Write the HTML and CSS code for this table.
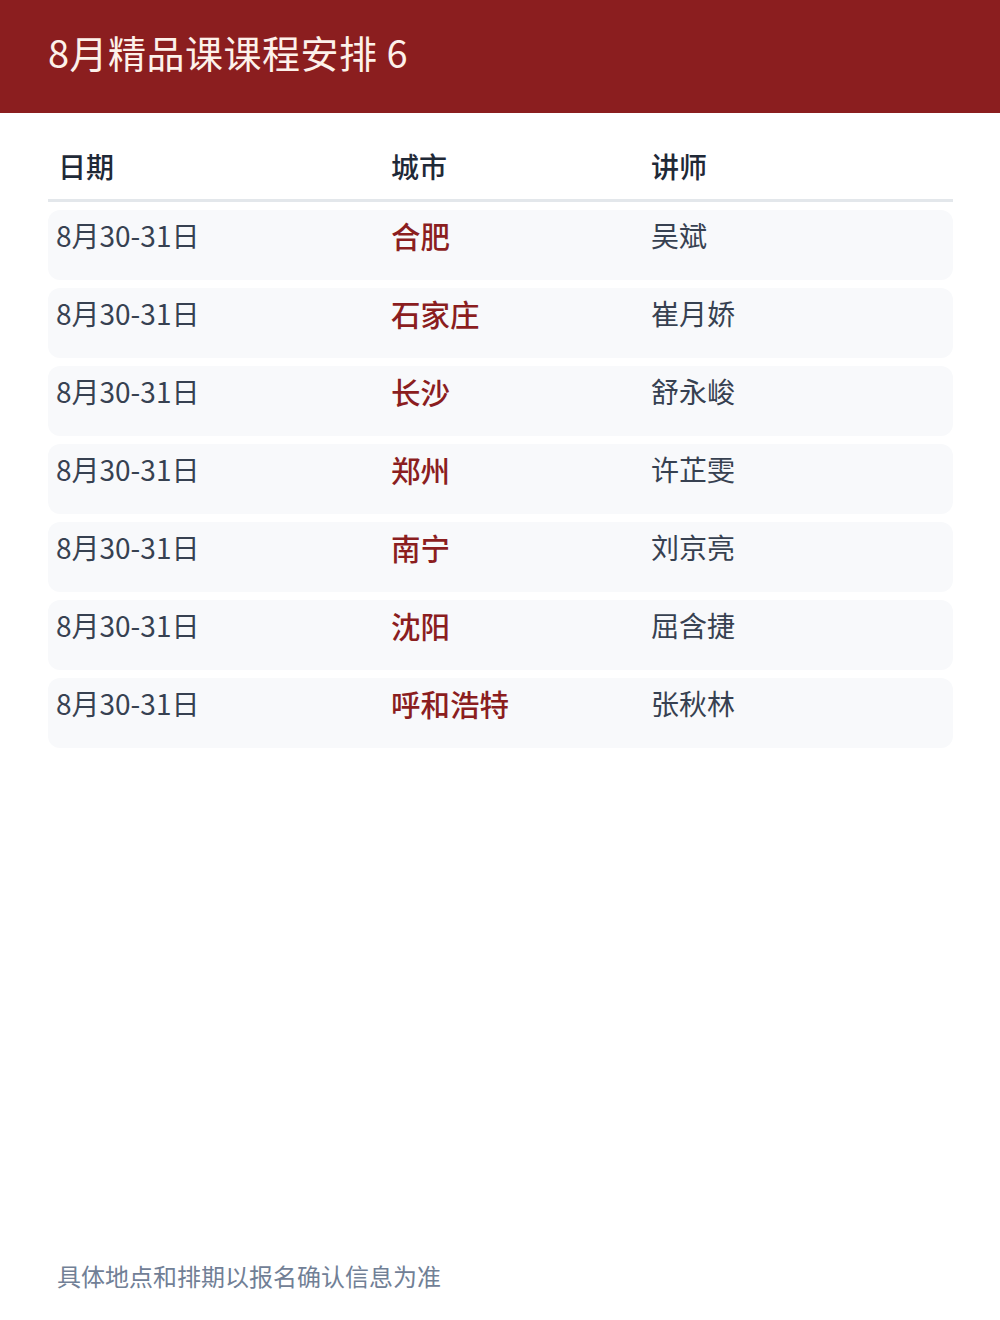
FILE: index.html
```html
<!DOCTYPE html>
<html lang="zh">
<head>
<meta charset="utf-8">
<title>8月精品课课程安排 6</title>
<link rel="stylesheet" href="styles.css">
</head>
<body>
<div class="page">
  <header class="topbar">
    <h1 class="title">8月精品课课程安排 6</h1>
  </header>
  <main class="content">
    <div class="schedule">
      <div class="row head">
        <div class="cell c1">日期</div>
        <div class="cell">城市</div>
        <div class="cell">讲师</div>
      </div>
      <div class="row item">
        <div class="cell">8月30-31日</div>
        <div class="cell city">合肥</div>
        <div class="cell">吴斌</div>
      </div>
      <div class="row item">
        <div class="cell">8月30-31日</div>
        <div class="cell city">石家庄</div>
        <div class="cell">崔月娇</div>
      </div>
      <div class="row item">
        <div class="cell">8月30-31日</div>
        <div class="cell city">长沙</div>
        <div class="cell">舒永峻</div>
      </div>
      <div class="row item">
        <div class="cell">8月30-31日</div>
        <div class="cell city">郑州</div>
        <div class="cell">许芷雯</div>
      </div>
      <div class="row item">
        <div class="cell">8月30-31日</div>
        <div class="cell city">南宁</div>
        <div class="cell">刘京亮</div>
      </div>
      <div class="row item">
        <div class="cell">8月30-31日</div>
        <div class="cell city">沈阳</div>
        <div class="cell">屈含捷</div>
      </div>
      <div class="row item">
        <div class="cell">8月30-31日</div>
        <div class="cell city">呼和浩特</div>
        <div class="cell">张秋林</div>
      </div>
    </div>
  </main>
  <footer class="note">具体地点和排期以报名确认信息为准</footer>
</div>
</body>
</html>
```

FILE: styles.css
```css
html, body {
  margin: 0;
  padding: 0;
  background: #ffffff;
}
body {
  font-family: "Noto Sans CJK SC", "Noto Sans", sans-serif;
  color: #1f2937;
}
.page {
  width: 1000px;
  height: 1320px;
  display: flex;
  flex-direction: column;
}
.topbar {
  background: #8b1e1f;
  height: 113px;
  display: flex;
  align-items: center;
  padding: 0 48px;
  box-sizing: border-box;
}
.title {
  margin: 0;
  font-size: 38px;
  font-weight: 400;
  color: #fdf1ea;
  line-height: 1;
  padding-bottom: 10px;
  letter-spacing: 0.5px;
}
.content {
  flex: 1;
  padding: 28px 47px 0 48px;
}
.schedule {
  display: flex;
  flex-direction: column;
  gap: 8px;
}
.row {
  display: grid;
  grid-template-columns: 335px 260px 1fr;
}
.cell {
  padding-left: 8px;
  font-size: 28px;
  line-height: 40px;
}
.head {
  padding: 5px 0 13px;
  border-bottom: 3px solid #e3e7eb;
}
.head .cell {
  font-weight: 500;
  color: #1f2937;
}
.head .c1 {
  padding-left: 10px;
}
.item {
  background: #f8f9fb;
  border-radius: 12px;
  height: 70px;
  box-sizing: border-box;
  padding-top: 5px;
}
.item .cell {
  color: #374151;
  font-weight: 400;
}
.item .city {
  color: #8b1e1f;
  font-weight: 500;
  font-size: 29.5px;
}
.note {
  padding: 0 57px 28px;
  font-size: 24px;
  line-height: 32px;
  color: #718096;
}
```
